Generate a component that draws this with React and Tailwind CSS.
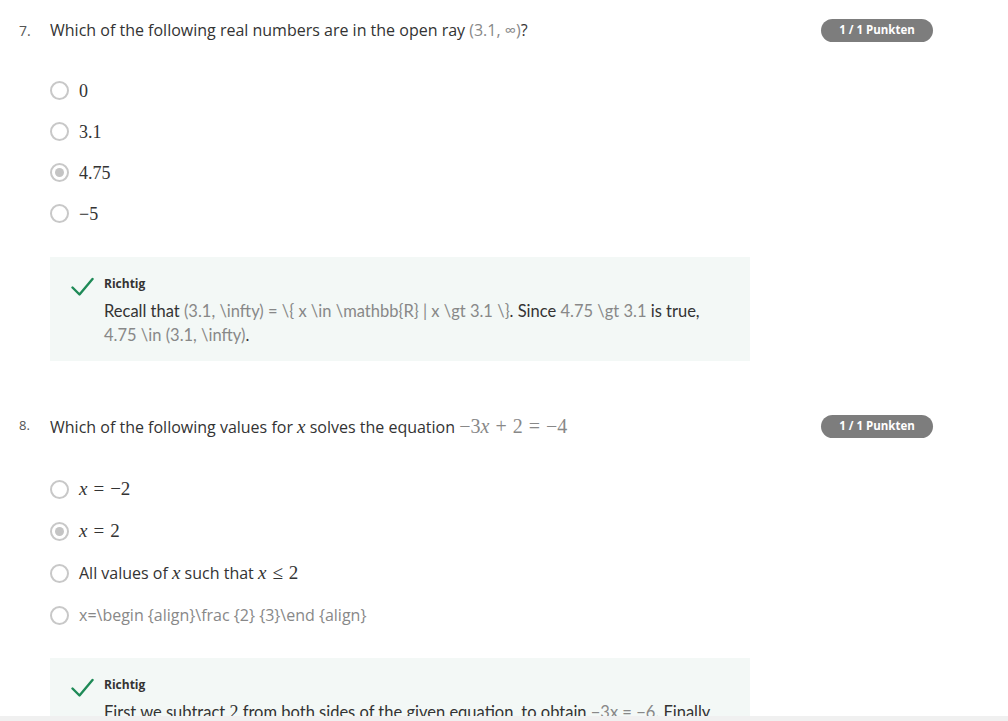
import React from 'react';

const serif = "font-['Liberation_Serif','DejaVu_Serif',serif]";

function Radio({ checked }) {
  return (
    <span className="flex h-[19px] w-[19px] shrink-0 items-center justify-center rounded-full border-2 border-[#c8c8c8] bg-white">
      {checked && <span className="h-[9px] w-[9px] rounded-full bg-[#c4c4c4]" />}
    </span>
  );
}

function Option({ checked, children, h }) {
  return (
    <div className={`flex items-center gap-[10px] ${h}`}>
      <Radio checked={checked} />
      <div className="text-[16px] leading-[20px] text-[#333]">{children}</div>
    </div>
  );
}

function Badge() {
  return (
    <span className="flex h-[23px] w-[112px] shrink-0 items-center justify-center rounded-full bg-[#7d7d7d] text-[11.5px] font-bold text-white">
      1 / 1 Punkten
    </span>
  );
}

function Check() {
  return (
    <svg width="23" height="20" viewBox="0 0 23 20" className="mt-[1px] shrink-0">
      <path d="M1.5 10.5 L8.5 17.5 L21.5 2" fill="none" stroke="#1e8a57" strokeWidth="2.4" strokeLinecap="round" strokeLinejoin="round" />
    </svg>
  );
}

function Feedback({ children, className = '' }) {
  return (
    <div className={`ml-[50px] w-[700px] shrink-0 bg-[#f3f8f6] pl-[21px] pr-[30px] pt-[19px] ${className}`}>
      <div className="flex gap-[10px]">
        <Check />
        <div>
          <div className="text-[12px] font-bold leading-[16px] text-[#333]">Richtig</div>
          <div className="mt-[7px] font-['Lato',sans-serif] text-[16.5px] leading-[24px] text-[#333]">
            {children}
          </div>
        </div>
      </div>
    </div>
  );
}

const M = ({ children }) => <span className="text-[#888]">{children}</span>;
const Op = ({ children }) => <span className="mx-[6px]">{children}</span>;

export default function App() {
  return (
    <div className="relative flex h-[721px] flex-col overflow-hidden bg-white font-['Open_Sans',sans-serif] text-[#333]">
      <div className="mt-[18px] flex h-[24px] items-center pr-[75px]">
        <span className="w-[50px] pl-[19px] text-[14px] text-[#555]">7.</span>
        <div className="flex-1 text-[16px]">
          Which of the following real numbers are in the open ray <M>(3.1, ∞)</M>?
        </div>
        <Badge />
      </div>

      <div className="ml-[50px] mt-[28px] flex flex-col">
        <Option h="h-[41px]">
          <span className={`${serif} text-[18px]`}>0</span>
        </Option>
        <Option h="h-[41px]">
          <span className={`${serif} text-[18px]`}>3.1</span>
        </Option>
        <Option checked h="h-[41px]">
          <span className={`${serif} text-[18px]`}>4.75</span>
        </Option>
        <Option h="h-[41px]">
          <span className={`${serif} text-[18px]`}>−5</span>
        </Option>
      </div>

      <Feedback className="mt-[23px] h-[104px]">
        Recall that <M>(3.1, \infty) = \{'{'} x \in \mathbb{'{'}R{'}'} | x \gt 3.1 \{'}'}</M>. Since <M>4.75 \gt 3.1</M> is true,
        <br />
        <M>4.75 \in (3.1, \infty)</M>.
      </Feedback>

      <div className="mt-[53px] flex h-[24px] items-center pr-[75px]">
        <span className="w-[50px] pl-[19px] text-[13px] text-[#555]">8.</span>
        <div className="flex-1 text-[16px]">
          Which of the following values for <i className={`${serif} text-[19px]`}>x</i> solves the equation{' '}
          <span className={`${serif} text-[20px] text-[#888]`}>−3<i>x</i><Op>+</Op>2<Op>=</Op>−4</span>
        </div>
        <Badge />
      </div>

      <div className="ml-[50px] mt-[30px] flex flex-col">
        <Option h="h-[42px]">
          <span className={`${serif} text-[19px]`}><i>x</i><Op>=</Op>−2</span>
        </Option>
        <Option checked h="h-[42px]">
          <span className={`${serif} text-[19px]`}><i>x</i><Op>=</Op>2</span>
        </Option>
        <Option h="h-[42px]">
          All values of <i className={`${serif} text-[19px]`}>x</i> such that <span className={`${serif} text-[19px]`}><i>x</i><Op>≤</Op>2</span>
        </Option>
        <Option h="h-[42px]">
          <span className="text-[#888]">x=\begin {'{'}align{'}'}\frac {'{'}2{'}'} {'{'}3{'}'}\end {'{'}align{'}'}</span>
        </Option>
      </div>

      <Feedback className="mt-[22px] h-[80px]">
        First we subtract <span className={`${serif} text-[18px]`}>2</span> from both sides of the given equation, to obtain <M>−3x = −6</M>. Finally,
      </Feedback>

      <div className="absolute bottom-0 left-0 right-0 h-[5px] bg-[#f0f0f0]" />
    </div>
  );
}
